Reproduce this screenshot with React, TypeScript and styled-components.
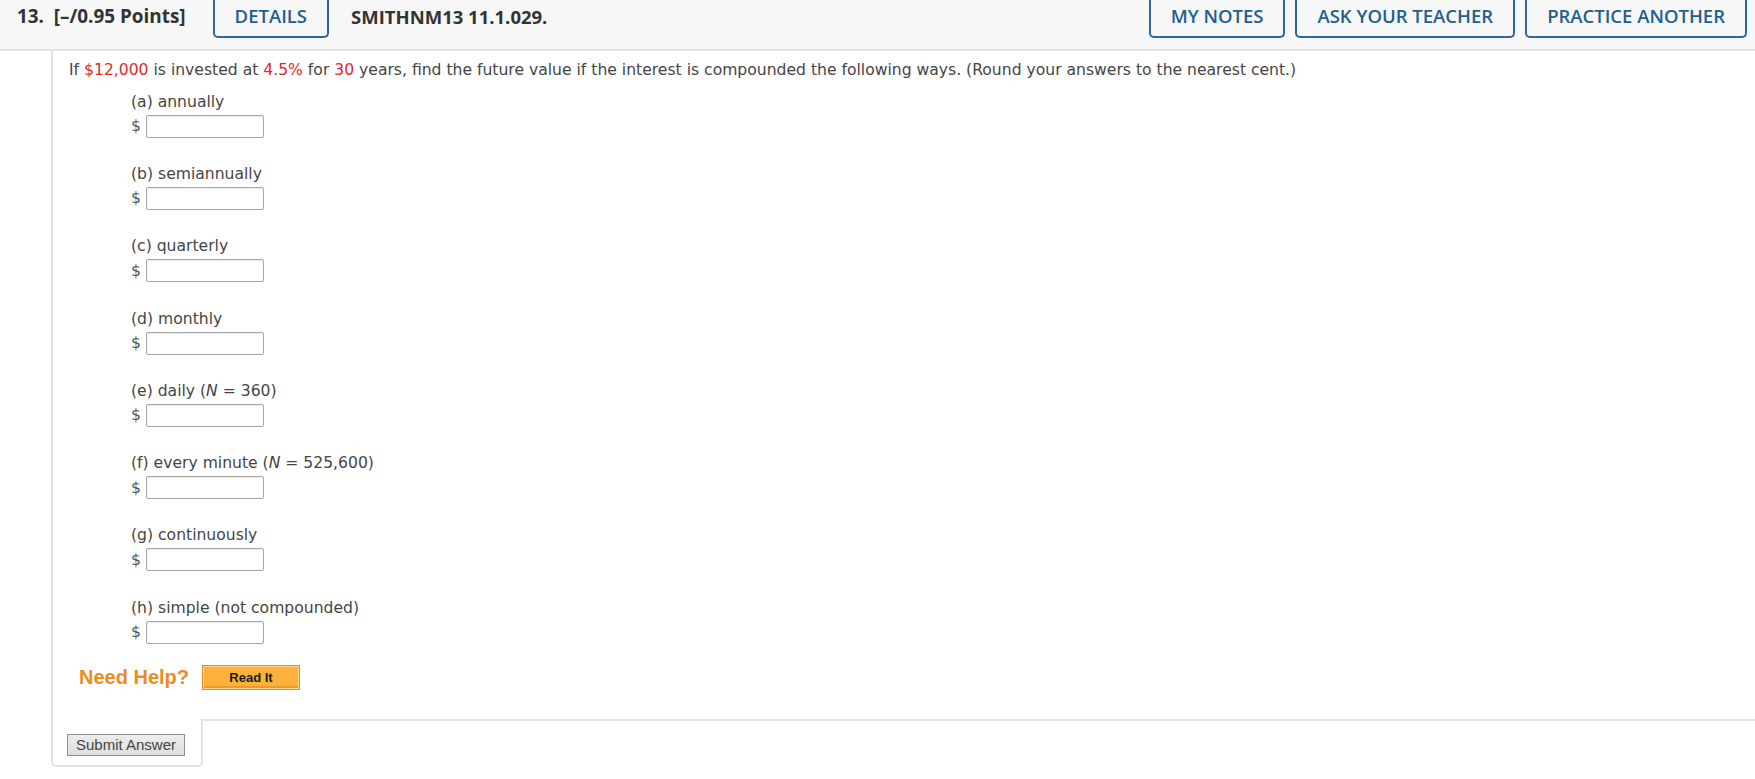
import React from "react";
import styled, { createGlobalStyle } from "styled-components";

const GlobalStyle = createGlobalStyle`
  html, body {
    margin: 0;
    padding: 0;
    background: #ffffff;
  }
  * {
    box-sizing: border-box;
  }
`;

// Header bar
const Header = styled.div`
  display: flex;
  align-items: flex-start;
  height: 51px;
  padding: 0 8px 0 17px;
  background: #f7f7f7;
  border-bottom: 2px solid #e2e2e2;
  font-family: "Open Sans", "Liberation Sans", sans-serif;
`;

const Title = styled.div`
  font-size: 18.9px;
  font-weight: 700;
  line-height: 33px;
  color: #333333;
  white-space: pre;
  margin-right: 27px;
`;

const Code = styled.div`
  font-size: 18.5px;
  font-weight: 700;
  line-height: 33px;
  color: #333333;
  margin-left: 22px;
`;

const Spacer = styled.div`
  flex: 1;
`;

const RightButtons = styled.div`
  display: flex;
  gap: 10px;
`;

const HeaderButton = styled.button`
  height: 38px;
  padding: 0 20px 5px;
  background: transparent;
  border: 2px solid #2b679b;
  border-top: none;
  border-radius: 0 0 5px 5px;
  font-family: "Open Sans", "Liberation Sans", sans-serif;
  font-size: 18.5px;
  font-weight: 600;
  color: #215f90;
  cursor: pointer;
  white-space: nowrap;
`;

// Question body
const Question = styled.div`
  margin-left: 51px;
  font-family: "DejaVu Sans", Verdana, sans-serif;
  font-size: 15.6px;
  color: #454545;
`;

const Body = styled.div`
  border-left: 2px solid #e2e2e2;
  padding: 9px 16px 29px;
`;

const Prompt = styled.div`
  line-height: 20px;
  white-space: nowrap;
`;

const Given = styled.span`
  color: #e2282c;
`;

const Parts = styled.div`
  display: flex;
  flex-direction: column;
  gap: 26.3px;
  margin: 11.7px 0 0 62px;
`;

const Part = styled.div`
  display: flex;
  flex-direction: column;
`;

const PartLabel = styled.div`
  line-height: 20px;
`;

const AnswerRow = styled.div`
  display: flex;
  align-items: center;
  gap: 5px;
  margin-top: 3px;
  height: 23px;
`;

const Dollar = styled.span`
  color: #555555;
`;

const AnswerInput = styled.input`
  width: 118px;
  height: 23px;
  border: 1px solid #a6a6a6;
  border-radius: 2px;
  background: #ffffff;
  box-shadow: inset 0 1px 1px rgba(0, 0, 0, 0.08);
`;

const HelpRow = styled.div`
  display: flex;
  align-items: center;
  gap: 13px;
  margin: 21px 0 0 10px;
`;

const NeedHelp = styled.span`
  font-family: "Liberation Sans", Arial, sans-serif;
  font-weight: bold;
  font-size: 20px;
  color: #ec8b1f;
`;

const ReadIt = styled.button`
  width: 98px;
  height: 25px;
  padding: 0;
  background: #fcb23a;
  border: 1px solid #de8d2e;
  box-shadow: inset 0 0 0 1px #fdd48a, inset 0 -2px 0 1px #e89a30;
  font-family: "Liberation Sans", Arial, sans-serif;
  font-weight: bold;
  font-size: 13px;
  color: #1a1a1a;
  cursor: pointer;
`;

const Footer = styled.div`
  display: flex;
  align-items: flex-start;
`;

const SubmitTab = styled.div`
  width: 152px;
  padding: 15px 14px 9px;
  border: 2px solid #e2e2e2;
  border-top: none;
  border-radius: 0 0 5px 5px;
`;

const SubmitButton = styled.button`
  width: 118px;
  height: 22px;
  padding: 0;
  background: linear-gradient(#ededed, #dedede);
  border: 1px solid #8f8f8f;
  font-family: "Liberation Sans", Arial, sans-serif;
  font-size: 15px;
  color: #444444;
  cursor: pointer;
`;

const Rule = styled.div`
  flex: 1;
  border-top: 2px solid #e2e2e2;
`;

const parts: { label: React.ReactNode }[] = [
  { label: "(a) annually" },
  { label: "(b) semiannually" },
  { label: "(c) quarterly" },
  { label: "(d) monthly" },
  {
    label: (
      <>
        (e) daily (<i>N</i> = 360)
      </>
    ),
  },
  {
    label: (
      <>
        (f) every minute (<i>N</i> = 525,600)
      </>
    ),
  },
  { label: "(g) continuously" },
  { label: "(h) simple (not compounded)" },
];

const App: React.FC = () => {
  return (
    <>
      <GlobalStyle />
      <Header>
        <Title>{"13.  [–/0.95 Points]"}</Title>
        <HeaderButton>DETAILS</HeaderButton>
        <Code>SMITHNM13 11.1.029.</Code>
        <Spacer />
        <RightButtons>
          <HeaderButton>MY NOTES</HeaderButton>
          <HeaderButton>ASK YOUR TEACHER</HeaderButton>
          <HeaderButton>PRACTICE ANOTHER</HeaderButton>
        </RightButtons>
      </Header>

      <Question>
        <Body>
          <Prompt>
            If <Given>$12,000</Given> is invested at <Given>4.5%</Given> for{" "}
            <Given>30</Given> years, find the future value if the interest is
            compounded the following ways. (Round your answers to the nearest
            cent.)
          </Prompt>

          <Parts>
            {parts.map((p, i) => (
              <Part key={i}>
                <PartLabel>{p.label}</PartLabel>
                <AnswerRow>
                  <Dollar>$</Dollar>
                  <AnswerInput type="text" />
                </AnswerRow>
              </Part>
            ))}
          </Parts>

          <HelpRow>
            <NeedHelp>Need Help?</NeedHelp>
            <ReadIt>Read It</ReadIt>
          </HelpRow>
        </Body>

        <Footer>
          <SubmitTab>
            <SubmitButton>Submit Answer</SubmitButton>
          </SubmitTab>
          <Rule />
        </Footer>
      </Question>
    </>
  );
};

export default App;
